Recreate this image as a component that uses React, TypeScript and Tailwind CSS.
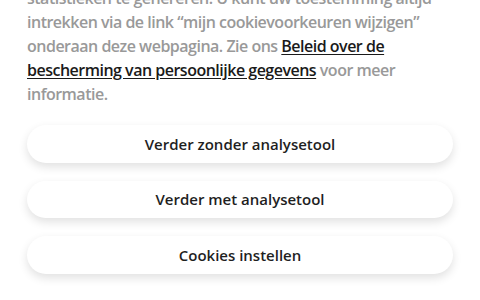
const buttons = ["Verder zonder analysetool", "Verder met analysetool", "Cookies instellen"];

export default function App() {
  return (
    <div
      className="w-[480px] h-[300px] overflow-hidden bg-white"
      style={{ fontFamily: '"Open Sans", "Noto Sans", sans-serif' }}
    >
      <div className="px-[27px] -mt-[14px]">
        <p className="text-[16px] leading-[24px] font-semibold text-[#999999] tracking-[-0.5px]">
          statistieken te genereren. U kunt uw toestemming altijd
          <br />
          intrekken via de link “mijn cookievoorkeuren wijzigen”
          <br />
          onderaan deze webpagina. Zie ons{" "}
          <a className="text-[#1a1a1a] underline underline-offset-2">Beleid over de</a>
          <br />
          <a className="text-[#1a1a1a] underline underline-offset-2">bescherming van persoonlijke gegevens</a> voor meer
          <br />
          informatie.
        </p>
        <div className="mt-[19px] flex flex-col gap-[18px]">
          {buttons.map((b) => (
            <button
              key={b}
              className="h-[37.5px] w-full rounded-full bg-white text-[15px] font-semibold text-[#1f1f1f] shadow-[0_4px_10px_rgba(0,0,0,0.12)]"
            >
              {b}
            </button>
          ))}
        </div>
      </div>
    </div>
  );
}
